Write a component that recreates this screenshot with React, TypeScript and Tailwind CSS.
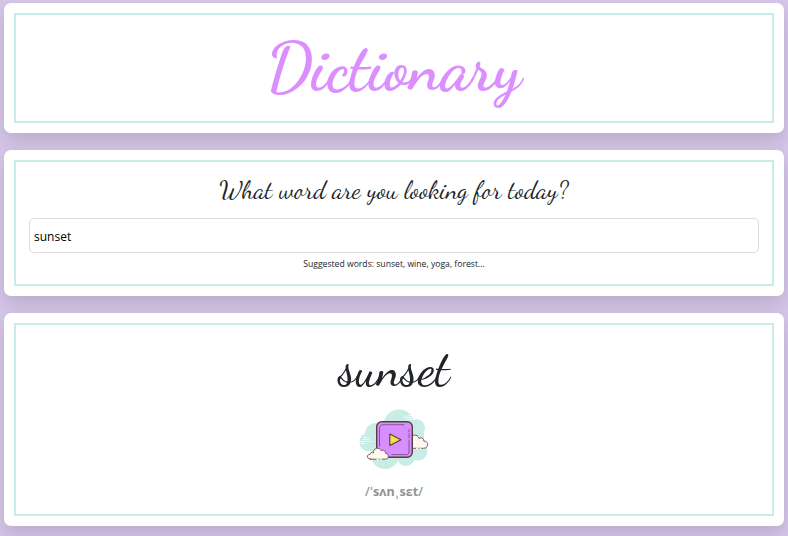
import React from "react";

const script = "font-['Dancing_Script','Liberation_Serif',cursive] whitespace-nowrap";

function Panel({ children, className }: { children: React.ReactNode; className: string }) {
  return (
    <section className={`rounded-[7px] bg-white p-[10px] shadow-[0_8px_18px_rgba(0,0,0,0.13)] ${className}`}>
      <div className="flex h-full flex-col items-center border-2 border-[#c7ede6]">{children}</div>
    </section>
  );
}

function PlayIcon() {
  return (
    <svg viewBox="0 0 90 75" className="ml-[2px] h-[75px] w-[90px] shrink-0" fill="none" strokeLinecap="round" strokeLinejoin="round">
      <g fill="#c7ede6">
        <circle cx="49" cy="25" r="15.500" />
        <circle cx="26" cy="34" r="11" />
        <circle cx="19" cy="42" r="9.500" />
        <circle cx="35" cy="55" r="14" />
        <circle cx="66" cy="28" r="9" />
        <circle cx="68" cy="51" r="9.500" />
        <circle cx="56" cy="57" r="9" />
        <path d="M22 25h52v27H22z" />
      </g>
      <path d="M54 17.300h9m1.500 0h2M58 15.300h6M57 19.400h8M10 41.400h8m1.500 0h2M13 39.400h6M11 43.400h4M14 37.500h3" stroke="#fff" strokeWidth=".8" />
      <path d="M60 48.300h13.500c5.500 0 5.500-7.300.3-7.300.2-3-3.200-4-4.600-2.300-1.200-5.400-9.200-4.500-9.200.8z" fill="#fff8ee" stroke="#6b504a" strokeWidth=".9" />
      <path d="M66.500 48.300h1.200M70 48.300h.6" stroke="#fff8ee" strokeWidth="1.400" />
      <rect x="26.700" y="21.700" width="35.600" height="35.600" rx="5" fill="#d78fff" stroke="#5a3d42" strokeWidth="1.400" />
      <path d="M29.500 46V28.500c0-2.600 1.300-3.800 3.800-3.800H54M59 29.500v2.500M59 34v4M59 40v12c0 1.600-1 2.600-2.600 2.600H42" stroke="#6d4a70" strokeWidth=".8" />
      <path d="M39.800 34v11.500L51 39.700z" fill="#f5df4a" stroke="#5a3d32" strokeWidth="1.100" />
      <path d="M20.500 59.200h14.700c4.500 0 4-6 .2-6 .2-3.300-3-3.300-4-2.400-1.600-4.500-8.800-2.700-8.100 2.200-1.300-1-3.200-.3-3.200 1.300-4 .1-3.500 4.900.4 4.900z" fill="#fff8ee" stroke="#6b504a" strokeWidth=".9" />
      <path d="M27 59.200h1.400M30.500 59.200h.8" stroke="#fff8ee" strokeWidth="1.400" />
    </svg>
  );
}

export default function App() {
  return (
    <main className="flex h-[536px] flex-col gap-[17px] overflow-hidden bg-[#d6c6e9] px-1 pt-[3px] text-[#212529]">
      <Panel className="h-[130px] shrink-0">
        <h1 className={`${script} mt-[13px] text-[66.500px] font-bold leading-[80px] text-[#db8fff]`}>
          Dictionary
        </h1>
      </Panel>
      <Panel className="h-[146px] shrink-0">
        <label htmlFor="word" className={`${script} mt-[12px] text-[25.400px] leading-[32px]`}>
          What word are you looking for today?
        </label>
        <div className="mt-3 w-full px-[13px]">
          <input
            id="word"
            defaultValue="sunset"
            className="block h-[35px] w-full rounded-[5px] border border-[#dcdcdc] bg-white px-1 pt-[2px] font-['Open_Sans',sans-serif] text-[12px] text-black outline-none"
          />
        </div>
        <p className="mt-[4px] whitespace-nowrap font-['Open_Sans',sans-serif] text-[8.640px] leading-[14px]">
          Suggested words: sunset, wine, yoga, forest...
        </p>
      </Panel>
      <Panel className="h-[213px] shrink-0">
        <h2 className={`${script} mt-[15px] h-[60px] text-[50px] font-medium leading-[58px]`}>sunset</h2>
        <PlayIcon />
        <p className="mt-[8px] font-['Noto_Sans',sans-serif] text-[12.500px] font-bold leading-[18px] text-[#929292]">
          <span className="font-medium">/</span>
          <span className="px-[0.6px] font-normal">ˈ</span>sʌn
          <span className="px-[1.500px] font-normal">ˌ</span>sɛt
          <span className="font-medium">/</span>
        </p>
      </Panel>
    </main>
  );
}
